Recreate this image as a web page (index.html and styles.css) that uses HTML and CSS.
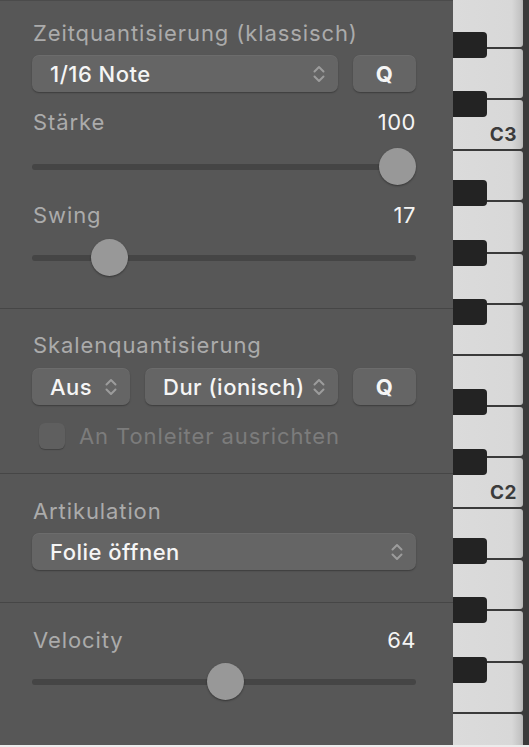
FILE: index.html
```html
<!DOCTYPE html>
<html lang="de">
<head>
<meta charset="utf-8">
<title>Quantisierung</title>
<link rel="stylesheet" href="styles.css">
</head>
<body>
<div class="app">
  <div class="panel">
    <section class="sec sec-time">
      <div class="label">Zeitquantisierung (klassisch)</div>
      <div class="row">
        <div class="popup grow"><span>1/16 Note</span><svg class="chev" viewBox="0 0 14 20"><path d="M2.5 7.5 L7 3 L11.5 7.5 M2.5 12.5 L7 17 L11.5 12.5"/></svg></div>
        <div class="btn">Q</div>
      </div>
      <div class="label-row mt-18"><span class="label">Stärke</span><span class="value">100</span></div>
      <div class="slider mt-14"><div class="track"></div><div class="knob" style="left:calc((100% - 37px) * 1)"></div></div>
      <div class="label-row mt-18"><span class="label">Swing</span><span class="value">17</span></div>
      <div class="slider mt-12"><div class="track"></div><div class="knob" style="left:calc((100% - 37px) * 0.17)"></div></div>
    </section>
    <section class="sec sec-scale">
      <div class="label">Skalenquantisierung</div>
      <div class="row mt-11">
        <div class="popup aus"><span>Aus</span><svg class="chev" viewBox="0 0 14 20"><path d="M2.5 7.5 L7 3 L11.5 7.5 M2.5 12.5 L7 17 L11.5 12.5"/></svg></div>
        <div class="popup dur"><span>Dur (ionisch)</span><svg class="chev" viewBox="0 0 14 20"><path d="M2.5 7.5 L7 3 L11.5 7.5 M2.5 12.5 L7 17 L11.5 12.5"/></svg></div>
        <div class="btn">Q</div>
      </div>
      <div class="check-row">
        <div class="checkbox"></div>
        <span class="check-label">An Tonleiter ausrichten</span>
      </div>
    </section>
    <section class="sec sec-art">
      <div class="label">Artikulation</div>
      <div class="row">
        <div class="popup grow"><span>Folie öffnen</span><svg class="chev" viewBox="0 0 14 20"><path d="M2.5 7.5 L7 3 L11.5 7.5 M2.5 12.5 L7 17 L11.5 12.5"/></svg></div>
      </div>
    </section>
    <section class="sec sec-vel">
      <div class="label-row"><span class="label">Velocity</span><span class="value">64</span></div>
      <div class="slider mt-11"><div class="track"></div><div class="knob" style="left:calc((100% - 37px) * 0.504)"></div></div>
    </section>
  </div>
  <div class="piano">
    <div class="whites">
      <div class="wk"></div>
      <div class="wk"></div>
      <div class="wk"><span class="note">C3</span></div>
      <div class="wk"></div>
      <div class="wk"></div>
      <div class="wk"></div>
      <div class="wk"></div>
      <div class="wk"></div>
      <div class="wk"></div>
      <div class="wk"><span class="note">C2</span></div>
      <div class="wk"></div>
      <div class="wk"></div>
      <div class="wk"></div>
      <div class="wk"></div>
      <div class="wk"></div>
    </div>
    <div class="bk b1"></div>
    <div class="bk b2"></div>
    <div class="bk b3"></div>
    <div class="bk b4"></div>
    <div class="bk b5"></div>
    <div class="bk b6"></div>
    <div class="bk b7"></div>
    <div class="bk b8"></div>
    <div class="bk b9"></div>
    <div class="bk b10"></div>
  </div>
</div>
</body>
</html>
```
FILE: styles.css
```css
* { box-sizing: border-box; }
html, body { margin: 0; padding: 0; }
body {
  background: #ececec;
  font-family: Inter, "Open Sans", "DejaVu Sans", sans-serif;
}
.app {
  display: flex;
  width: 529px;
  height: 745px;
  overflow: hidden;
}
.panel {
  width: 453px;
  flex: none;
  background: #575757;
  box-shadow: inset 0 1px 0 #4b4b4b;
  display: flex;
  flex-direction: column;
}
.sec {
  padding: 0 37px 0 32px;
  border-bottom: 1px solid #464646;
  display: flex;
  flex-direction: column;
}
.sec-time { padding-top: 21px; height: 309px; }
.sec-scale { padding-top: 24px; height: 165px; }
.sec-art { padding-top: 25px; height: 129px; }
.sec-vel { padding-top: 25px; flex: 1; border-bottom: none; }

.label {
  font-size: 22px;
  line-height: 24px;
  height: 24px;
  color: #ababab;
  letter-spacing: 0.9px;
  padding-left: 1px;
  white-space: nowrap;
}
.label-row {
  display: flex;
  justify-content: space-between;
  height: 24px;
}
.value {
  font-size: 22px;
  line-height: 24px;
  color: #f4f4f4;
  letter-spacing: 0.5px;
}
.mt-11 { margin-top: 11px !important; }
.mt-12 { margin-top: 12px; }
.mt-14 { margin-top: 14px; }
.mt-18 { margin-top: 18px; }

.row {
  display: flex;
  gap: 15px;
  margin-top: 10px;
  height: 37px;
}
.popup, .btn {
  background: #656565;
  border-radius: 7px;
  display: flex;
  align-items: center;
  box-shadow: 0 1px 1.5px rgba(0,0,0,0.3), inset 0 1px 0 rgba(255,255,255,0.05);
  color: #f5f5f5;
  font-size: 22px;
  font-weight: 500;
  letter-spacing: 0.5px;
  white-space: nowrap;
}
.popup {
  justify-content: space-between;
  padding: 0 12px 0 18px;
}
.grow { flex: 1; }
.aus { width: 98px; }
.dur { width: 193px; }
.btn {
  width: 63px;
  justify-content: center;
  font-weight: 700;
}
.chev {
  width: 14px;
  height: 20px;
  flex: none;
}
.chev path {
  fill: none;
  stroke: #9c9c9c;
  stroke-width: 2;
  stroke-linecap: round;
  stroke-linejoin: round;
}

.slider {
  position: relative;
  height: 37px;
  display: flex;
  align-items: center;
}
.track {
  flex: 1;
  height: 6px;
  border-radius: 3px;
  background: #454545;
}
.knob {
  position: absolute;
  top: 0;
  width: 37px;
  height: 37px;
  border-radius: 50%;
  background: #989898;
  box-shadow: 0 1px 2px rgba(0,0,0,0.4);
}

.check-row {
  display: flex;
  align-items: center;
  margin-top: 18px;
  height: 26px;
}
.checkbox {
  width: 26px;
  height: 26px;
  margin-left: 7px;
  border-radius: 6px;
  background: #5f5f5f;
  box-shadow: 0 1px 1px rgba(0,0,0,0.25);
}
.check-label {
  margin-left: 14px;
  font-size: 22px;
  line-height: 24px;
  color: #7c7c7c;
  letter-spacing: 0.9px;
}

.piano {
  position: relative;
  flex: 1;
  background: #3a3a3a;
  overflow: hidden;
}
.whites {
  display: flex;
  flex-direction: column;
  margin-top: -2.14px;
  width: 70px;
}
.wk {
  height: 49.14px;
  margin-bottom: 2px;
  flex: none;
  background: linear-gradient(to right, #dbdbdb 0%, #d8d8d8 84%, #c4c4c4 96%, #b4b4b4 100%);
  border-radius: 0 3px 3px 0;
  display: flex;
  justify-content: flex-end;
  align-items: flex-end;
  padding: 0 6px 5px 0;
}
.note {
  font-size: 19px;
  line-height: 19px;
  font-weight: 700;
  color: #3b3b3b;
  letter-spacing: 0.5px;
}
.bk {
  position: absolute;
  left: 0;
  width: 34px;
  height: 26px;
  background: #232323;
  border-radius: 0 4px 4px 0;
}
.b1 { top: 32px; }
.b2 { top: 91px; }
.b3 { top: 180px; }
.b4 { top: 240px; }
.b5 { top: 299px; }
.b6 { top: 389px; }
.b7 { top: 449px; }
.b8 { top: 538px; }
.b9 { top: 597px; }
.b10 { top: 657px; }
```
